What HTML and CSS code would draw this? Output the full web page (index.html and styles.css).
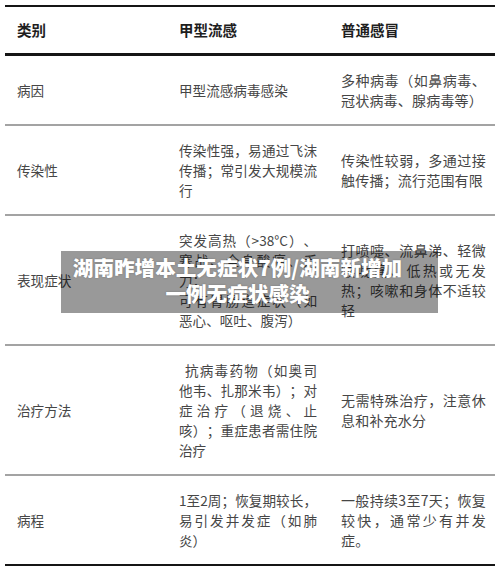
FILE: index.html
```html
<!DOCTYPE html>
<html lang="zh-CN">
<head>
<meta charset="utf-8">
<title>甲型流感与普通感冒</title>
<link rel="stylesheet" href="styles.css">
</head>
<body>
<div class="page">
  <div class="table">
    <div class="row head">
      <div class="cell c1">类别</div>
      <div class="cell c2">甲型流感</div>
      <div class="cell c3">普通感冒</div>
    </div>
    <div class="row">
      <div class="cell c1">病因</div>
      <div class="cell c2">甲型流感病毒感染</div>
      <div class="cell c3">多种病毒（如鼻病毒、冠状病毒、腺病毒等）</div>
    </div>
    <div class="row">
      <div class="cell c1">传染性</div>
      <div class="cell c2">传染性强，易通过飞沫传播；常引发大规模流行</div>
      <div class="cell c3">传染性较弱，多通过接触传播；流行范围有限</div>
    </div>
    <div class="row">
      <div class="cell c1">表现症状</div>
      <div class="cell c2">突发高热（&gt;38°C）、寒战、全身酸痛、乏力；<br>可有胃肠道症状（如<span class="nowrap">恶心</span>、呕吐、腹泻）</div>
      <div class="cell c3">打喷嚏、流鼻涕、轻微喉咙痛、低热或无发热；咳嗽和身体不适较轻</div>
    </div>
    <div class="row">
      <div class="cell c1">治疗方法</div>
      <div class="cell c2 indent">抗病毒药物（如奥司他韦、扎那米韦）；对症治疗（退烧、止咳）；重症患者需住院治疗</div>
      <div class="cell c3">无需特殊治疗，注意休息和补充水分</div>
    </div>
    <div class="row last">
      <div class="cell c1">病程</div>
      <div class="cell c2">1至2周；恢复期较长，易引发并发症（如肺炎）</div>
      <div class="cell c3">一般持续3至7天；恢复较快，通常少有并发症。</div>
    </div>
  </div>
  <div class="banner">湖南昨增本土无症状7例/湖南新增加一例无症状感染</div>
</div>
</body>
</html>
```
FILE: styles.css
```css
html, body {
  margin: 0;
  padding: 0;
  background: #ffffff;
}
body {
  font-family: "Noto Sans CJK SC", "Noto Sans", sans-serif;
  color: #464646;
  text-spacing-trim: space-all;
}
.page {
  position: relative;
  width: 500px;
  height: 566px;
  overflow: hidden;
}
.table {
  margin: 5px 5px 0 5px;
  border-top: 2px solid #151515;
}
.row {
  display: grid;
  grid-template-columns: 162px 162px 1fr;
  border-bottom: 2px solid #a3a3a3;
  padding: 14px 0;
}
.row.head {
  padding: 13px 0;
  border-bottom: 3px solid #151515;
}
.row.last {
  border-bottom: 4px solid #151515;
}
.cell {
  align-self: center;
  font-size: 13.6px;
  line-height: 20px;
  padding-left: 12px;
}
.c2 {
  padding-right: 12px;
  text-align: justify;
}
.c3 {
  padding-right: 9px;
  font-size: 14px;
  letter-spacing: 0.2px;
  text-align: justify;
}
.head .cell {
  font-size: 14.5px;
  font-weight: 700;
  color: #1e1e1e;
  letter-spacing: 0;
}
.indent {
  text-indent: 6px;
}
.nowrap {
  display: inline-block;
  text-indent: 0;
}
.banner {
  position: absolute;
  left: 61px;
  top: 251px;
  width: 337px;
  padding: 3px 32px 7px 8px;
  background: rgba(0, 0, 0, 0.4);
  color: #ffffff;
  font-size: 20.6px;
  font-weight: 900;
  line-height: 26px;
  text-align: center;
  text-shadow: 0 0 2px rgba(0, 0, 0, 0.25);
}
```
